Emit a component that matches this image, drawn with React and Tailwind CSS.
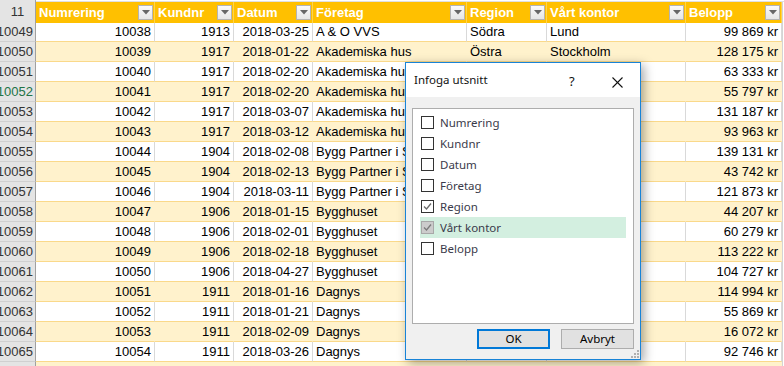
import React from "react";

const rows = [
  ["10049", "10038", "1913", "2018-03-25", "A & O VVS", "Södra", "Lund", "99 869 kr"],
  ["10050", "10039", "1917", "2018-01-22", "Akademiska hus", "Östra", "Stockholm", "128 175 kr"],
  ["10051", "10040", "1917", "2018-02-20", "Akademiska hus", "", "", "63 333 kr"],
  ["10052", "10041", "1917", "2018-02-20", "Akademiska hus", "", "", "55 797 kr"],
  ["10053", "10042", "1917", "2018-03-07", "Akademiska hus", "", "", "131 187 kr"],
  ["10054", "10043", "1917", "2018-03-12", "Akademiska hus", "", "", "93 963 kr"],
  ["10055", "10044", "1904", "2018-02-08", "Bygg Partner i Sverige", "", "", "139 131 kr"],
  ["10056", "10045", "1904", "2018-02-13", "Bygg Partner i Sverige", "", "", "43 742 kr"],
  ["10057", "10046", "1904", "2018-03-11", "Bygg Partner i Sverige", "", "", "121 873 kr"],
  ["10058", "10047", "1906", "2018-01-15", "Bygghuset", "", "", "44 207 kr"],
  ["10059", "10048", "1906", "2018-02-01", "Bygghuset", "", "", "60 279 kr"],
  ["10060", "10049", "1906", "2018-02-18", "Bygghuset", "", "", "113 222 kr"],
  ["10061", "10050", "1906", "2018-04-27", "Bygghuset", "", "", "104 727 kr"],
  ["10062", "10051", "1911", "2018-01-16", "Dagnys", "", "", "114 994 kr"],
  ["10063", "10052", "1911", "2018-01-21", "Dagnys", "", "", "55 869 kr"],
  ["10064", "10053", "1911", "2018-02-09", "Dagnys", "", "", "16 072 kr"],
  ["10065", "10054", "1911", "2018-03-26", "Dagnys", "", "", "92 746 kr"],
];

const headers = ["Numrering", "Kundnr", "Datum", "Företag", "Region", "Vårt kontor", "Belopp"];
const align = ["right", "right", "right", "left", "left", "left", "right"];

const GRID = "grid grid-cols-[36px_119px_79px_79px_154px_80px_139px_96px_2px]";

function DropBtn() {
  return (
    <div className="absolute right-[1px] top-[3px] w-[15px] h-[15px] border border-[#B4B4B4] bg-gradient-to-b from-[#FAFAFA] to-[#E6E6E6] flex items-center justify-center">
      <svg width="8" height="5" viewBox="0 0 8 5">
        <polygon points="0,0 8,0 4,4.5" fill="#666666" />
      </svg>
    </div>
  );
}

function Check({ checked, disabled }) {
  return (
    <div
      className={
        "w-[13px] h-[13px] border flex items-center justify-center shrink-0 " +
        (disabled ? "bg-[#CCCCCC] border-[#A8A8A8]" : "bg-white border-[#333333]")
      }
    >
      {checked && (
        <svg width="11" height="11" viewBox="0 0 11 11">
          <polyline
            points="2,5.5 4.5,8 9,2.5"
            fill="none"
            stroke={disabled ? "#7A7A7A" : "#6A6A6A"}
            strokeWidth="1.3"
          />
        </svg>
      )}
    </div>
  );
}

const items = [
  ["Numrering", false],
  ["Kundnr", false],
  ["Datum", false],
  ["Företag", false],
  ["Region", true],
  ["Vårt kontor", true, true],
  ["Belopp", false],
];

export default function App() {
  return (
    <div className="relative w-[784px] h-[366px] overflow-hidden bg-white text-[13px] text-black font-['Liberation_Sans',Arial,sans-serif]">
      {/* top strip */}
      <div className={GRID + " h-[2px]"}>
        <div className="bg-[#E4E4E4] border-r border-[#A0A0A0]" />
        <div className="col-span-8 bg-white border-b border-[#E0E0E0]" />
      </div>
      {/* header */}
      <div className={GRID + " h-[20px]"}>
        <div className="bg-[#E4E4E4] border-r border-[#A0A0A0] border-b border-b-[#D0D0D0] flex items-center justify-center text-[#333333]">
          11
        </div>
        {headers.map((h) => (
          <div
            key={h}
            className="relative bg-[#FFC000] border-r border-[#FFD34D] text-white font-bold pl-[3px] flex items-center whitespace-nowrap overflow-hidden"
          >
            {h}
            <DropBtn />
          </div>
        ))}
        <div className="bg-white border-l border-[#D4D4D4]" />
      </div>
      {/* data rows */}
      {rows.map((r, i) => {
        const odd = i % 2 === 1;
        const bg = odd ? "bg-[#FFF2CC]" : "bg-white";
        const vline = odd ? "border-r-[#FFF2CC]" : "border-r-[#D9D9D9]";
        return (
          <div key={r[0]} className={GRID + " h-[20px]"}>
            <div
              className={
                "bg-[#E4E4E4] border-r border-r-[#A0A0A0] border-b border-b-[#D0D0D0] flex items-center justify-end pr-[2px] overflow-hidden whitespace-nowrap " +
                (r[0] === "10052" ? "text-[#217346]" : "text-[#333333]")
              }
            >
              {r[0]}
            </div>
            {r.slice(1).map((c, j) => (
              <div
                key={j}
                className={
                  bg +
                  " border-b border-b-[#FAD98A] border-r " +
                  vline +
                  " flex items-center overflow-hidden whitespace-nowrap " +
                  (align[j] === "right" ? "justify-end pr-[3px]" : "justify-start pl-[3px]")
                }
              >
                {c}
              </div>
            ))}
            <div className="bg-white border-l border-[#D4D4D4]" />
          </div>
        );
      })}
      {/* trailing partial row */}
      <div className={GRID + " h-[4px]"}>
        <div className="bg-[#E4E4E4] border-r border-[#A0A0A0]" />
        <div className="col-span-7 bg-[#FFF2CC]" />
        <div className="bg-white border-l border-[#D4D4D4]" />
      </div>

      {/* dialog */}
      <div className="absolute left-[405px] top-[62px] w-[236px] h-[298px] border border-[#1883D7] bg-[#F0F0F0] flex flex-col shadow-[3px_3px_10px_rgba(0,0,0,0.35)] font-['Noto_Sans',sans-serif] text-[11.5px]">
        <div className="h-[34px] bg-white flex items-center pl-[8px] shrink-0 relative">
          <span className="text-[#111111]">Infoga utsnitt</span>
          <span className="absolute left-[163px] top-[9px] text-[13px] text-[#111111]">?</span>
          <svg className="absolute left-[206px] top-[14px]" width="11" height="11" viewBox="0 0 11 11">
            <line x1="0.5" y1="0.5" x2="10.5" y2="10.5" stroke="#111111" strokeWidth="1.1" />
            <line x1="10.5" y1="0.5" x2="0.5" y2="10.5" stroke="#111111" strokeWidth="1.1" />
          </svg>
        </div>
        <div className="flex-1 flex flex-col px-[6px] pt-[11px] relative">
          <div className="h-[216px] bg-white border border-[#ADADAD] pt-[3px] flex flex-col">
            {items.map(([label, checked, hl]) => (
              <div
                key={label}
                className={
                  "h-[21px] mx-[7px] pl-[1px] flex items-center gap-[6px] text-[#3A3A4A] " +
                  (hl ? "bg-[#D3EFE0]" : "")
                }
              >
                <Check checked={checked} disabled={hl} />
                <span>{label}</span>
              </div>
            ))}
          </div>
          <div className="flex justify-end gap-[11px] mt-[5px]">
            <button className="w-[73px] h-[20px] border-2 border-[#0078D7] bg-[#E1E1E1] flex items-center justify-center text-black">
              OK
            </button>
            <button className="w-[73px] h-[20px] border border-[#ADADAD] bg-[#E1E1E1] flex items-center justify-center text-black">
              Avbryt
            </button>
          </div>
          <svg className="absolute right-[1px] bottom-[1px]" width="8" height="8" viewBox="0 0 8 8">
            <rect x="6" y="0" width="2" height="2" fill="#B0B0B0" />
            <rect x="3" y="3" width="2" height="2" fill="#B0B0B0" />
            <rect x="6" y="3" width="2" height="2" fill="#B0B0B0" />
            <rect x="0" y="6" width="2" height="2" fill="#B0B0B0" />
            <rect x="3" y="6" width="2" height="2" fill="#B0B0B0" />
            <rect x="6" y="6" width="2" height="2" fill="#B0B0B0" />
          </svg>
        </div>
      </div>
    </div>
  );
}
